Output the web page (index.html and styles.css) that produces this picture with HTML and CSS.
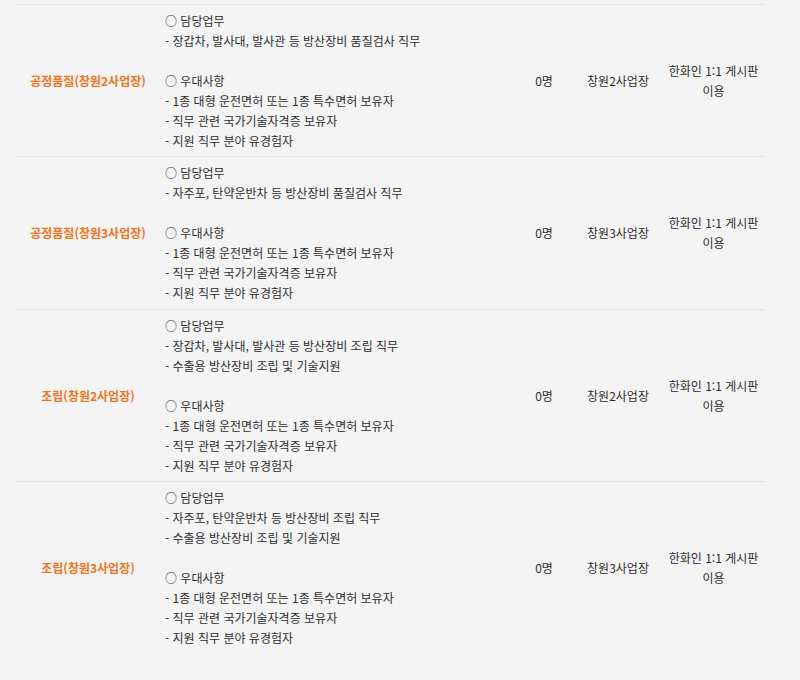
FILE: index.html
```html
<!DOCTYPE html>
<html lang="ko">
<head>
  <meta charset="UTF-8">
  <meta name="viewport" content="width=device-width, initial-scale=1.0">
  <title>모집 직무</title>
  <link rel="stylesheet" href="styles.css">
</head>
<body>
  <div class="wrap">
    <table class="job-table">
      <colgroup>
        <col class="c-title">
        <col class="c-desc">
        <col class="c-num">
        <col class="c-place">
        <col class="c-contact">
      </colgroup>
      <tbody>
        <tr>
          <td class="title">공정품질(창원2사업장)</td>
          <td class="desc">
            ○ 담당업무<br>
            - 장갑차, 발사대, 발사관 등 방산장비 품질검사 직무<br>
            <br>
            ○ 우대사항<br>
            - 1종 대형 운전면허 또는 1종 특수면허 보유자<br>
            - 직무 관련 국가기술자격증 보유자<br>
            - 지원 직무 분야 유경험자
          </td>
          <td>0명</td>
          <td>창원2사업장</td>
          <td>한화인 1:1 게시판 이용</td>
        </tr>
        <tr>
          <td class="title">공정품질(창원3사업장)</td>
          <td class="desc">
            ○ 담당업무<br>
            - 자주포, 탄약운반차 등 방산장비 품질검사 직무<br>
            <br>
            ○ 우대사항<br>
            - 1종 대형 운전면허 또는 1종 특수면허 보유자<br>
            - 직무 관련 국가기술자격증 보유자<br>
            - 지원 직무 분야 유경험자
          </td>
          <td>0명</td>
          <td>창원3사업장</td>
          <td>한화인 1:1 게시판 이용</td>
        </tr>
        <tr>
          <td class="title">조립(창원2사업장)</td>
          <td class="desc">
            ○ 담당업무<br>
            - 장갑차, 발사대, 발사관 등 방산장비 조립 직무<br>
            - 수출용 방산장비 조립 및 기술지원<br>
            <br>
            ○ 우대사항<br>
            - 1종 대형 운전면허 또는 1종 특수면허 보유자<br>
            - 직무 관련 국가기술자격증 보유자<br>
            - 지원 직무 분야 유경험자
          </td>
          <td>0명</td>
          <td>창원2사업장</td>
          <td>한화인 1:1 게시판 이용</td>
        </tr>
        <tr class="last">
          <td class="title">조립(창원3사업장)</td>
          <td class="desc">
            ○ 담당업무<br>
            - 자주포, 탄약운반차 등 방산장비 조립 직무<br>
            - 수출용 방산장비 조립 및 기술지원<br>
            <br>
            ○ 우대사항<br>
            - 1종 대형 운전면허 또는 1종 특수면허 보유자<br>
            - 직무 관련 국가기술자격증 보유자<br>
            - 지원 직무 분야 유경험자
          </td>
          <td>0명</td>
          <td>창원3사업장</td>
          <td>한화인 1:1 게시판 이용</td>
        </tr>
      </tbody>
    </table>
  </div>
</body>
</html>
```

FILE: styles.css
```css
body {
  margin: 0;
  background: #f4f4f4;
  font-family: "Noto Sans CJK KR", "Noto Sans", sans-serif;
  color: #2e2e2e;
}
.wrap {
  padding: 4px 36px 0 16px;
}
.job-table {
  width: 748px;
  border-collapse: collapse;
  table-layout: fixed;
  font-size: 12px;
  line-height: 20px;
}
.c-title { width: 144px; }
.c-desc { width: 355px; }
.c-num { width: 58px; }
.c-place { width: 90px; }
.c-contact { width: 101px; }
.job-table td {
  border-top: 1px solid #e3e3e3;
  padding: 6px 5px 5.4px;
  text-align: center;
  vertical-align: middle;
}
.job-table td.desc {
  text-align: left;
}
.job-table td.title {
  color: #f37321;
  font-weight: bold;
}
```
